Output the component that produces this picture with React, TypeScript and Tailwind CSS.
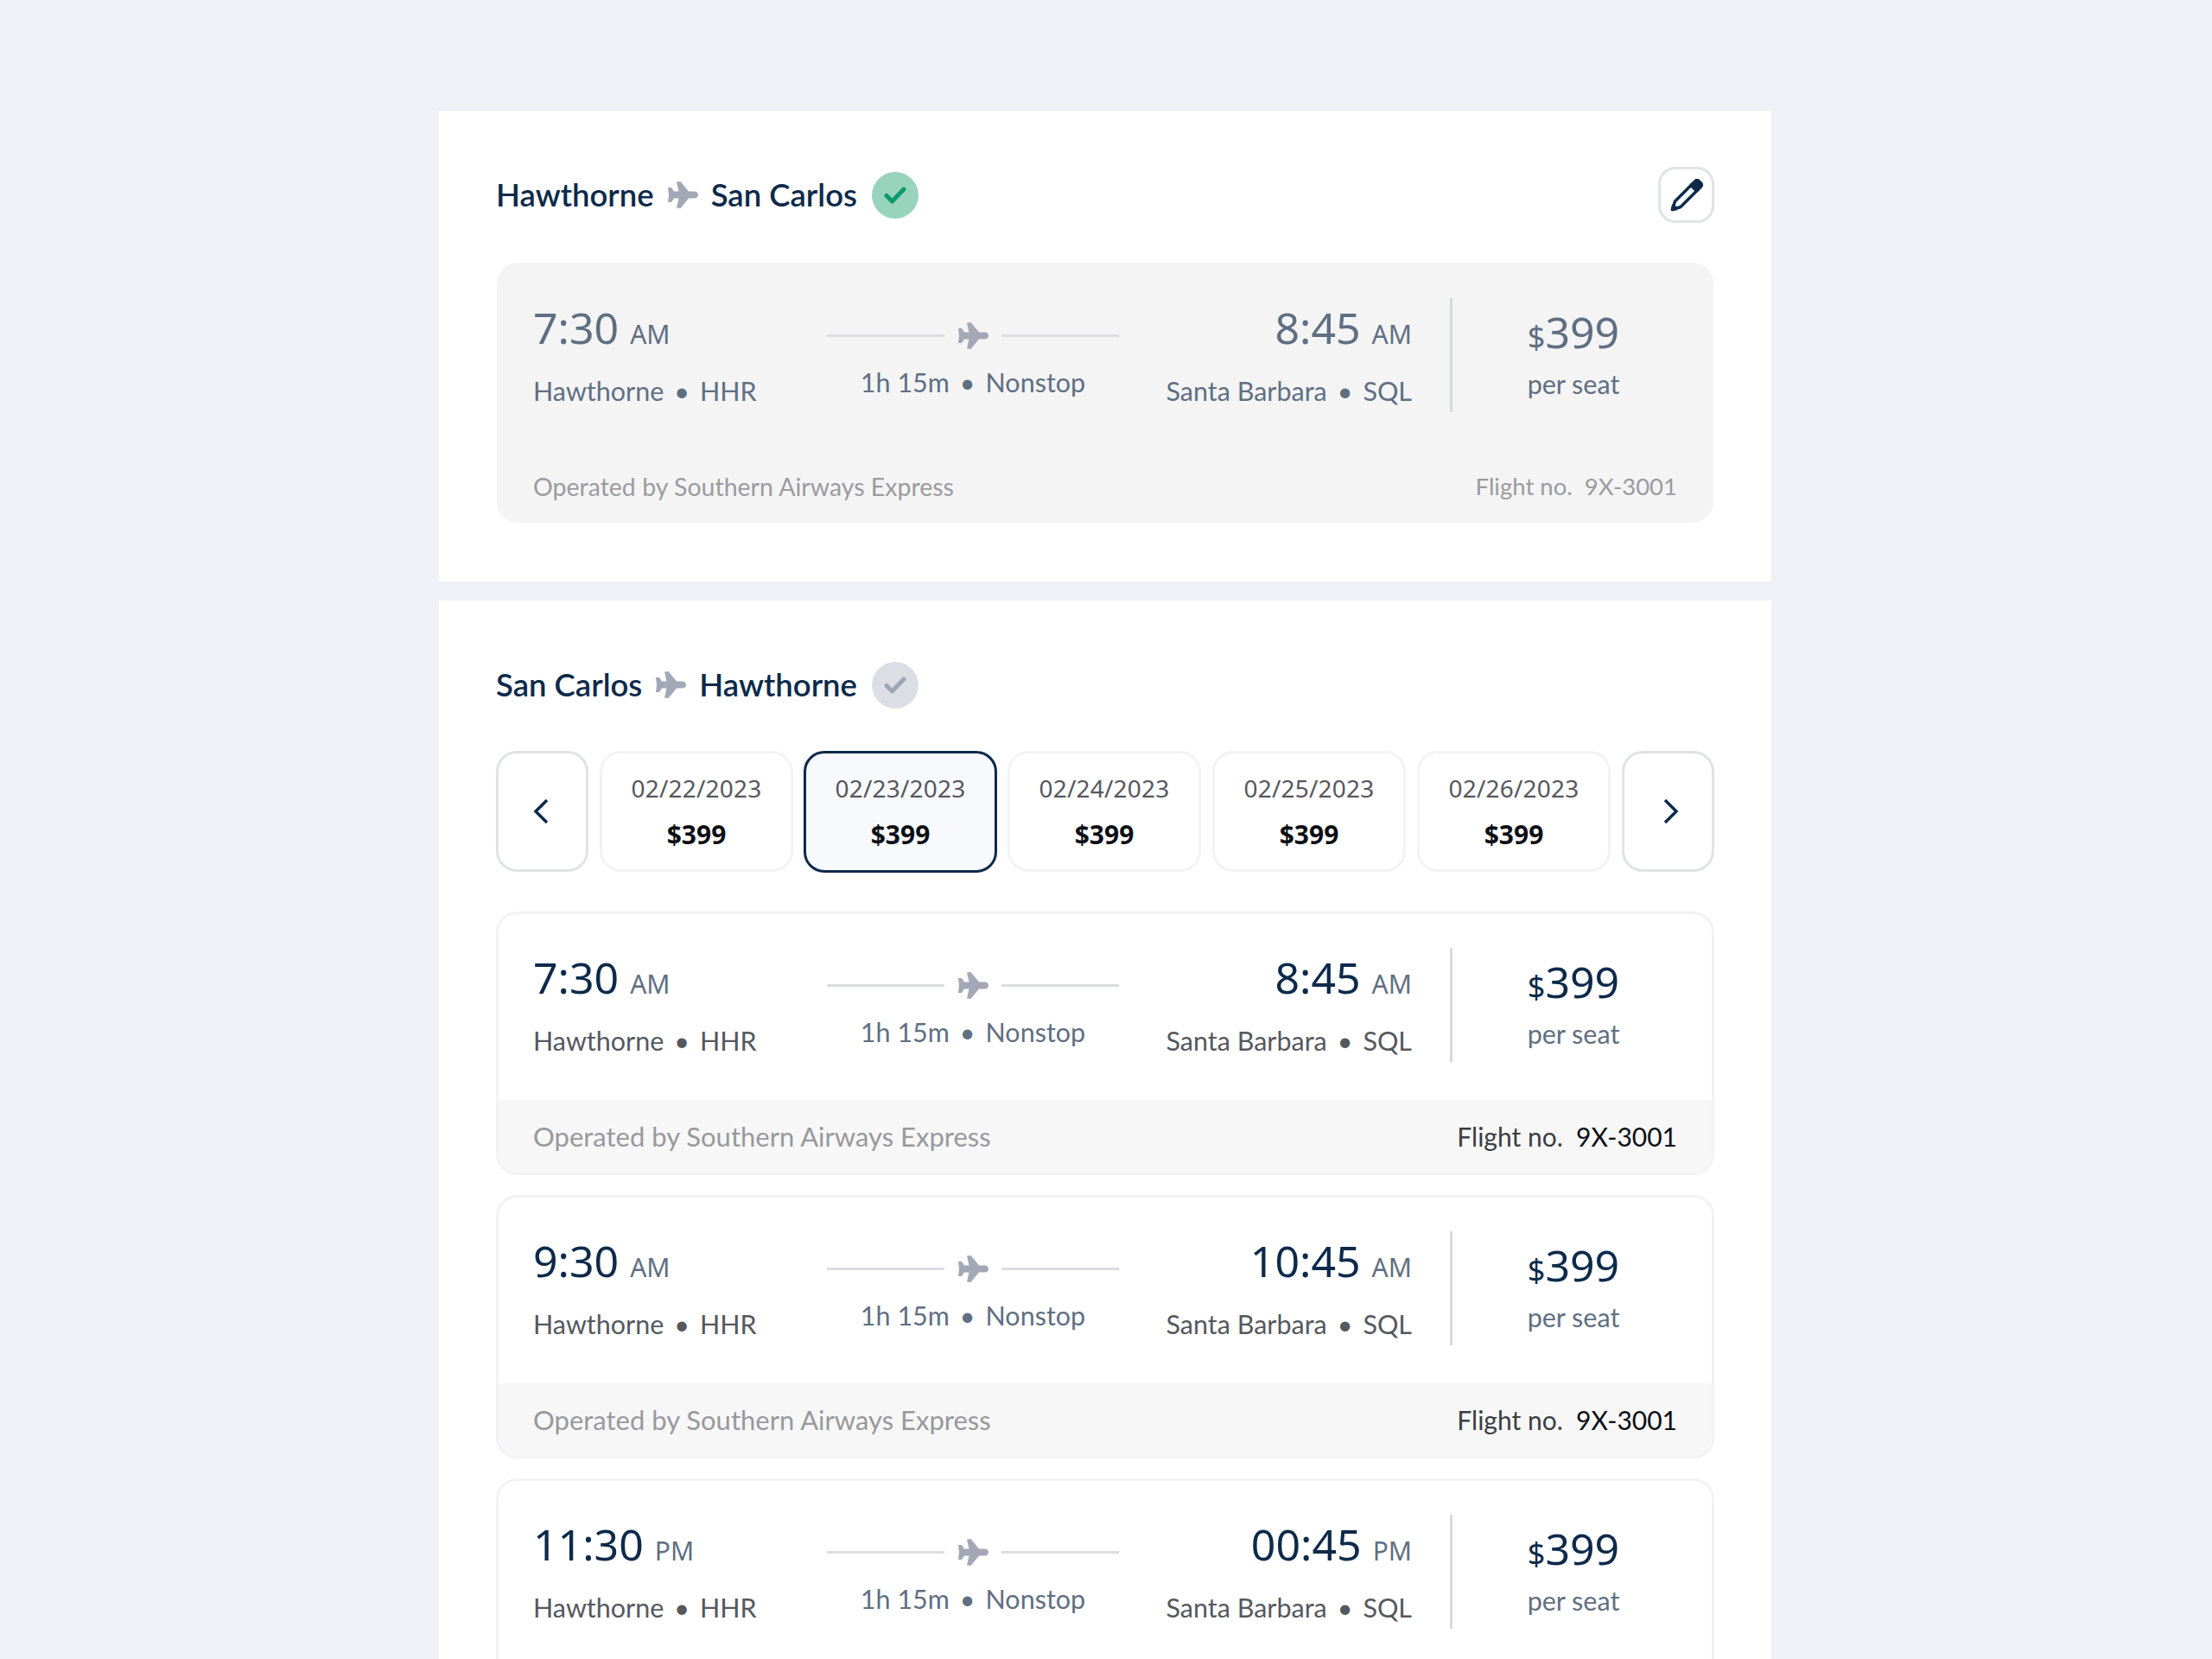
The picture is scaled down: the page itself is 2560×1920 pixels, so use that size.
const plane = 'M11 0.5L15.5 0L25 11.5H31.5C34.5 11.5 36 13.5 36 15.5C36 17.5 34.5 19.5 31.5 19.5H25L15.5 31L11 30.5L13.5 19.5H8L5 24H1L2 15.5L1 7H5L8 11.5H13.5Z';

function PlaneIcon() {
  return (
    <svg width="36" height="31" viewBox="0 0 36 31" className="shrink-0 text-[#a3a7b6]" fill="currentColor">
      <path d={plane} />
    </svg>
  );
}

function Route({ from, to, done }: { from: string; to: string; done?: boolean }) {
  return (
    <div className="flex items-center font-['Lato',sans-serif]">
      <span className="text-[36.5px] font-semibold leading-[65px] text-[#0d2a4a]">{from}</span>
      <span className="mx-[15px]"><PlaneIcon /></span>
      <span className="text-[36.5px] font-semibold leading-[65px] text-[#0d2a4a]">{to}</span>
      <span className={`ml-[17px] flex h-[54px] w-[54px] items-center justify-center rounded-full ${done ? 'bg-[#98d4bd]' : 'bg-[#dcdee5]'}`}>
        <svg width="26" height="20" viewBox="0 0 26 20" fill="none" stroke={done ? '#0a9a6b' : '#a0a5b3'} strokeWidth="5" strokeLinecap="round" strokeLinejoin="round">
          <path d="M3 10.5L9.5 17L23 3" />
        </svg>
      </span>
    </div>
  );
}

interface Flight {
  dep: string;
  depSuffix: string;
  arr: string;
  arrSuffix: string;
}

function Place({ name, code, color }: { name: string; code: string; color: string }) {
  return (
    <div className={`mt-[7px] font-['Lato',sans-serif] text-[30.5px] leading-[48px] ${color}`}>
      {name}<span className="mx-[12px]">•</span>{code}
    </div>
  );
}

function FlightRow({ flight, muted }: { flight: Flight; muted?: boolean }) {
  const timeColor = muted ? 'text-[#5f6f82]' : 'text-[#0d2a4a]';
  const subColor = muted ? 'text-[#5f6f82]' : 'text-[#55585e]';
  return (
    <div className={`flex ${muted ? 'pl-[42px]' : 'pl-[40px]'}`}>
      <div className="w-[340px] shrink-0">
        <div className={`text-[50px] leading-[69px] ${timeColor}`}>
          {flight.dep} <span className="text-[30px] text-[#5f6f82]">{flight.depSuffix}</span>
        </div>
        <Place name="Hawthorne" code="HHR" color={subColor} />
      </div>
      <div className="w-[338px] shrink-0">
        <div className="mt-[28px] flex items-center gap-[15px]">
          <div className="h-[3px] w-[136px] bg-[#dcdde1]" />
          <PlaneIcon />
          <div className="h-[3px] w-[136px] bg-[#dcdde1]" />
        </div>
        <div className="mt-[14px] text-center font-['Lato',sans-serif] text-[30.5px] leading-[48px] text-[#5f6f82]">
          1h 15m<span className="mx-[12px]">•</span>Nonstop
        </div>
      </div>
      <div className="w-[339px] shrink-0 text-right">
        <div className={`text-[50px] leading-[69px] ${timeColor}`}>
          {flight.arr} <span className="text-[30px] text-[#5f6f82]">{flight.arrSuffix}</span>
        </div>
        <Place name="Santa Barbara" code="SQL" color={subColor} />
      </div>
      <div className="ml-[44px] h-[132px] w-[3px] shrink-0 bg-[#d8d9dd]" />
      <div className="w-[280px] shrink-0 text-center">
        <div className={`mt-[4px] text-[50px] leading-[70px] ${timeColor}`}>
          <span className="text-[36px]">$</span>399
        </div>
        <div className="mt-[-5px] font-['Lato',sans-serif] text-[30.5px] leading-[48px] text-[#5f6f82]">per seat</div>
      </div>
    </div>
  );
}

const flights: Flight[] = [
  { dep: '7:30', depSuffix: 'AM', arr: '8:45', arrSuffix: 'AM' },
  { dep: '9:30', depSuffix: 'AM', arr: '10:45', arrSuffix: 'AM' },
  { dep: '11:30', depSuffix: 'PM', arr: '00:45', arrSuffix: 'PM' },
];

const dates = ['02/22/2023', '02/23/2023', '02/24/2023', '02/25/2023', '02/26/2023'];

export default function App() {
  return (
    <div className="h-[1920px] overflow-hidden bg-[#f0f1f6] pt-[128px] font-['Noto_Sans',sans-serif]">
      <section className="ml-[508px] h-[545px] w-[1542px] bg-white px-[66px] pt-[65px]">
        <div className="flex items-center justify-between">
          <Route from="Hawthorne" to="San Carlos" done />
          <button className="flex h-[65px] w-[65px] items-center justify-center rounded-[20px] border-[3px] border-[#e2e3e6]">
            <svg width="38" height="38" viewBox="0 0 38 38" fill="none" stroke="#0d2a4a" strokeWidth="3.5" strokeLinejoin="round">
              <path d="M2.5 35.5L5.5 26L26 5.5L32.5 12L12 32.5Z" />
              <path d="M24 7.5L29 2.5Q31 0.5 33 2.5L35.5 5Q37.5 7 35.5 9L30.5 14Z" fill="#0d2a4a" />
              <path d="M2.5 35.5L3.5 31L7 34.5Z" fill="#0d2a4a" />
            </svg>
          </button>
        </div>
        <div className="mx-[1px] mt-[46px] h-[301px] rounded-[24px] bg-[#f4f4f5] pt-[41px]">
          <FlightRow flight={flights[0]} muted />
          <div className="mt-[64px] flex justify-between px-[42px] font-['Lato',sans-serif] text-[28.5px] leading-[44px] text-[#9a9b9e]">
            <span>Operated by Southern Airways Express</span>
            <span className="text-[27.5px]">Flight no.&nbsp; 9X-3001</span>
          </div>
        </div>
      </section>

      <section className="ml-[508px] mt-[22px] h-[1300px] w-[1542px] bg-white px-[66px] pt-[65px]">
        <Route from="San Carlos" to="Hawthorne" />
        <div className="mt-[44px] flex h-[140px] gap-[13px]">
          <button className="flex w-[107px] shrink-0 items-center justify-center rounded-[24px] border-[3px] border-[#e2e3e6] pr-[4px]">
            <svg width="20" height="30" viewBox="0 0 20 30" fill="none" stroke="#0d2a4a" strokeWidth="3.5">
              <path d="M17 2L4 15L17 28" />
            </svg>
          </button>
          {dates.map((d, i) => (
            <div
              key={d}
              className={`flex flex-1 flex-col items-center rounded-[24px] border-[3px] pt-[18px] ${i === 1 ? '-mx-[1px] -mb-[1px] border-[#0d2a4a] bg-[#f8f9fd]' : 'border-[#f3f3f5] bg-white'}`}
            >
              <div className="text-[28px] tracking-[0.2px] leading-[44px] text-[#55585e]">{d}</div>
              <div className="mt-[10px] text-[30px] font-bold leading-[44px] text-[#0b0f14]">$399</div>
            </div>
          ))}
          <button className="flex w-[107px] shrink-0 items-center justify-center rounded-[24px] border-[3px] border-[#e2e3e6] pl-[6px]">
            <svg width="20" height="30" viewBox="0 0 20 30" fill="none" stroke="#0d2a4a" strokeWidth="3.5">
              <path d="M3 2L16 15L3 28" />
            </svg>
          </button>
        </div>
        <div className="mt-[46px] flex flex-col gap-[23px]">
          {flights.map((f) => (
            <div key={f.dep} className="overflow-hidden rounded-[24px] border-[3px] border-[#f3f3f5] bg-white">
              <div className="h-[215px] pt-[39px]">
                <FlightRow flight={f} />
              </div>
              <div className="flex h-[84px] items-center justify-between bg-[#f7f7f8] px-[40px] font-['Lato',sans-serif] text-[31px]">
                <span className="text-[#98999c]">Operated by Southern Airways Express</span>
                <span className="text-[30px] text-[#3b3d42]">Flight no.&nbsp; <span className="text-[#0b0f14]">9X-3001</span></span>
              </div>
            </div>
          ))}
        </div>
      </section>
    </div>
  );
}
